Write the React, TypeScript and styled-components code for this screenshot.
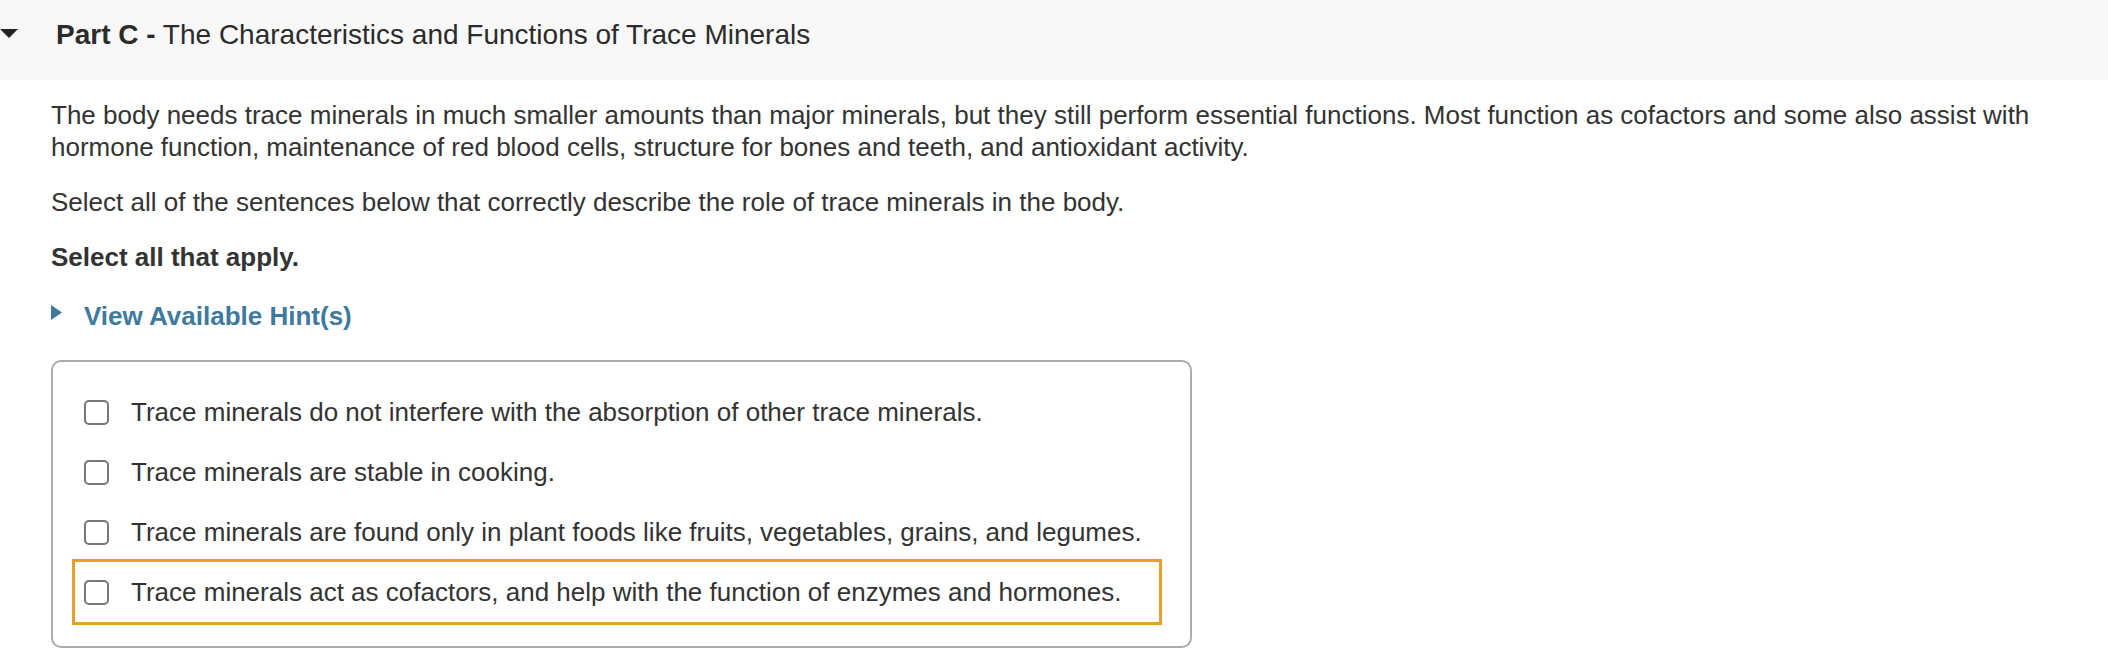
import React from "react"
import styled, { createGlobalStyle } from "styled-components"

const textColor = "#333333"
const linkColor = "#3e7aa0"
const focusColor = "#e8a22c"

const GlobalStyle = createGlobalStyle`
    html, body {
        margin: 0;
        padding: 0;
        background: #ffffff;
    }
    body {
        font-family: "Liberation Sans", Arial, Helvetica, sans-serif;
        color: ${textColor};
        -webkit-font-smoothing: antialiased;
    }
`

interface Choice {
    key: string
    label: string
}

const choices: Choice[] = [
    { key: "a", label: "Trace minerals do not interfere with the absorption of other trace minerals." },
    { key: "b", label: "Trace minerals are stable in cooking." },
    { key: "c", label: "Trace minerals are found only in plant foods like fruits, vegetables, grains, and legumes." },
    { key: "d", label: "Trace minerals act as cofactors, and help with the function of enzymes and hormones." },
]

export default function App() {
    const [checked, setChecked] = React.useState<Record<string, boolean>>({})
    const [hintOpen, setHintOpen] = React.useState(false)
    const focused = "d"

    return (
        <>
            <GlobalStyle />
            <PartHeader>
                <Caret width="18" height="9" viewBox="0 0 18 9">
                    <polygon points="0,0 18,0 9,9" fill="#222222" />
                </Caret>
                <PartTitle>
                    <strong>Part C -</strong> The Characteristics and Functions of Trace Minerals
                </PartTitle>
            </PartHeader>
            <PartBody>
                <Paragraph>
                    The body needs trace minerals in much smaller amounts than major minerals, but they still perform
                    essential functions. Most function as cofactors and some also assist with hormone function,
                    maintenance of red blood cells, structure for bones and teeth, and antioxidant activity.
                </Paragraph>
                <Paragraph gap={23}>
                    Select all of the sentences below that correctly describe the role of trace minerals in the body.
                </Paragraph>
                <Paragraph gap={23} bold>
                    Select all that apply.
                </Paragraph>
                <HintToggle onClick={() => setHintOpen(!hintOpen)}>
                    <HintArrow width="11" height="15" viewBox="0 0 11 15">
                        <polygon points="0,0 11,7.5 0,15" fill={linkColor} />
                    </HintArrow>
                    View Available Hint(s)
                </HintToggle>
                <ChoiceBox>
                    <ChoiceList>
                        {choices.map((choice) => (
                            <ChoiceRow key={choice.key} focused={choice.key === focused}>
                                <CheckBox
                                    checked={!!checked[choice.key]}
                                    onClick={() => setChecked({ ...checked, [choice.key]: !checked[choice.key] })}
                                />
                                <ChoiceLabel>{choice.label}</ChoiceLabel>
                            </ChoiceRow>
                        ))}
                    </ChoiceList>
                </ChoiceBox>
            </PartBody>
        </>
    )
}

const PartHeader = styled.div`
    display: flex;
    align-items: flex-start;
    height: 80px;
    box-sizing: border-box;
    padding-top: 19px;
    background-color: #f8f8f8;
`

const Caret = styled.svg`
    display: block;
    flex: none;
    margin-top: 10px;
`

const PartTitle = styled.div`
    margin-left: 38px;
    font-size: 28px;
    line-height: 32px;
    color: #2b2b2b;
    strong {
        font-weight: 700;
    }
`

const PartBody = styled.div`
    padding: 19px 40px 0 51px;
`

const Paragraph = styled.p<{ gap?: number; bold?: boolean }>`
    margin: ${(p) => p.gap || 0}px 0 0;
    font-size: 26px;
    line-height: 32px;
    font-weight: ${(p) => (p.bold ? 700 : 400)};
`

const HintToggle = styled.div`
    display: flex;
    align-items: flex-start;
    margin-top: 27px;
    font-size: 26px;
    line-height: 32px;
    font-weight: 700;
    color: ${linkColor};
    cursor: pointer;
`

const HintArrow = styled.svg`
    display: block;
    flex: none;
    margin: 5px 22px 0 0;
`

const ChoiceBox = styled.div`
    width: 1141px;
    box-sizing: border-box;
    margin-top: 28px;
    padding: 20px 0 24px 22px;
    border: 2px solid #ababab;
    border-radius: 10px;
`

const ChoiceList = styled.div`
    display: flex;
    flex-direction: column;
    width: 1084px;
`

const ChoiceRow = styled.label<{ focused?: boolean }>`
    display: flex;
    align-items: center;
    height: 60px;
    padding-left: 9px;
    box-sizing: border-box;
    outline: ${(p) => (p.focused ? `3px solid ${focusColor}` : "none")};
    cursor: pointer;
`

const CheckBox = styled.span<{ checked?: boolean }>`
    flex: none;
    width: 25px;
    height: 25px;
    box-sizing: border-box;
    border: 2px solid #777777;
    border-radius: 5px;
    background-color: ${(p) => (p.checked ? "#777777" : "#ffffff")};
`

const ChoiceLabel = styled.span`
    margin-left: 22px;
    font-size: 26px;
    line-height: 32px;
`
